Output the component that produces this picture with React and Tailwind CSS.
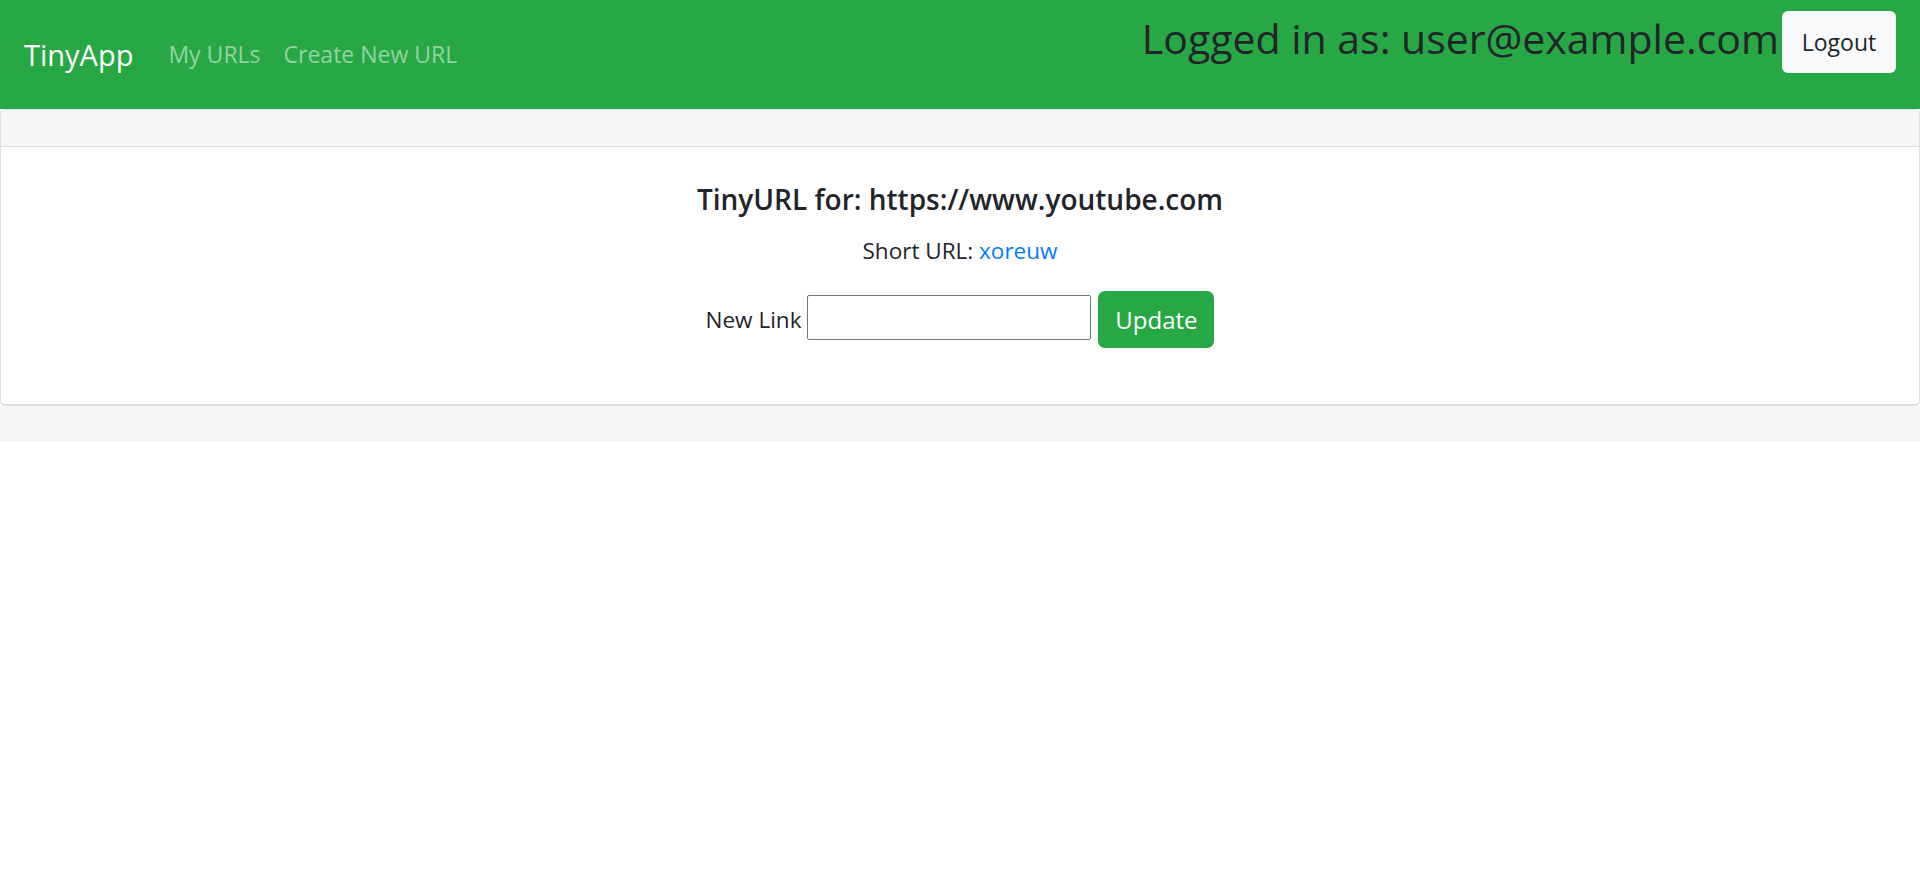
import React from 'react';

const font = { fontFamily: '"Open Sans", "Noto Sans", Arial, sans-serif' };

export default function App() {
  return (
    <div className="min-h-screen bg-white text-[#212529]" style={font}>
      {/* Top navbar */}
      <nav className="flex h-[109px] items-center bg-[#28a745] pl-[24px] pr-[24px]">
        <a className="text-[29px] leading-[40px] text-white">TinyApp</a>
        <div className="ml-[35px] flex items-center gap-[23px] text-[23px] text-white/50">
          <a>My URLs</a>
          <a>Create New URL</a>
        </div>
        <div className="ml-auto flex items-start self-start pt-[11px]">
          <h2 className="mt-[2px] text-[41px] font-medium leading-[50px] text-[#212529]">
            Logged in as: user@example.com
          </h2>
          <button className="ml-[3px] h-[62px] w-[114px] rounded-[6px] bg-[#f8f9fa] text-[23px] text-[#212529]">
            Logout
          </button>
        </div>
      </nav>

      {/* Card */}
      <div className="rounded-[5px] border border-[#dfdfdf] border-b-2 border-b-[#dcdcdc]">
        <div className="h-[37px] rounded-t-[5px] border-b border-[#dcdcdc] bg-[#f7f7f7]" />
        <div className="flex flex-col items-center pt-[32px] pb-[56px]">
          <h4 className="text-[28px] font-semibold leading-[40px]">
            TinyURL for: https://www.youtube.com
          </h4>
          <p className="mt-[17px] text-[22.5px] leading-[30px]">
            Short URL: <a className="text-[#007bff]">xoreuw</a>
          </p>
          <form className="mt-[25px] flex h-[57px] items-center">
            <label className="text-[22.5px] leading-[30px]">New Link</label>
            <input
              type="text"
              className="ml-[6px] mb-[4px] h-[45px] w-[284px] rounded-[2px] border border-[#767676] bg-white"
            />
            <button
              type="button"
              className="ml-[7px] h-[57px] w-[116px] rounded-[7px] bg-[#28a745] text-[24px] text-white"
            >
              Update
            </button>
          </form>
        </div>
      </div>

      {/* Footer */}
      <div className="h-[36px] bg-[#f6f6f6]" />
    </div>
  );
}
